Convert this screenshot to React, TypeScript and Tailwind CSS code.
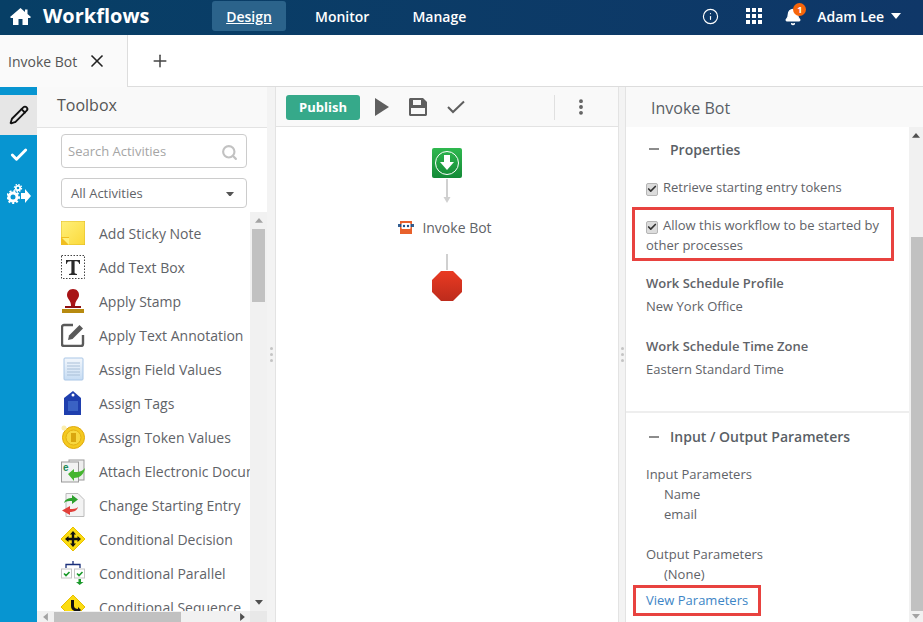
import React from 'react';
import { Info, Search, X, Plus, Check, Pencil, Bell, EllipsisVertical } from 'lucide-react';

const Caret = ({ dir = 'down', color = '#555', size = 8 }: { dir?: 'up' | 'down' | 'left' | 'right'; color?: string; size?: number }) => {
  const pts = { up: '0,6 5,0 10,6', down: '0,0 10,0 5,6', left: '6,0 6,10 0,5', right: '0,0 0,10 6,5' }[dir];
  const horizontal = dir === 'up' || dir === 'down';
  return (
    <svg width={horizontal ? size : 5} height={horizontal ? size * 0.6 : 8} viewBox={horizontal ? '0 0 10 6' : '0 0 6 10'}>
      <polygon points={pts} fill={color} />
    </svg>
  );
};

const Sticky = () => (
  <svg width="24" height="24" viewBox="0 0 24 24">
    <defs>
      <linearGradient id="st" x1="0" y1="0" x2="1" y2="1">
        <stop offset="0" stopColor="#fff07a" />
        <stop offset="1" stopColor="#fbd93a" />
      </linearGradient>
    </defs>
    <path d="M0 0H24V24H8L0 16Z" fill="url(#st)" stroke="#d9b320" strokeWidth="0.8" />
    <path d="M0 16H8V24H0Z" fill="#f0be20" />
    <path d="M1 17H8V24Z" fill="#fff07a" />
  </svg>
);

const TextBox = () => (
  <svg width="24" height="24" viewBox="0 0 24 24">
    <rect x="0.5" y="0.5" width="23" height="23" fill="none" stroke="#444" strokeDasharray="1.5 1.5" />
    <path d="M5 5H19V9H18.3C17.8 7 17 6.3 13.6 6.3V17.5C13.6 18.5 14.6 18.8 16 19V20H8V19C9.4 18.8 10.4 18.5 10.4 17.5V6.3C7 6.3 6.2 7 5.7 9H5Z" fill="#2a2a2a" />
  </svg>
);

const Stamp = () => (
  <svg width="24" height="24" viewBox="0 0 24 24">
    <path d="M12 0C16 0 18 3 18 6C18 10 14 11 14 17H10C10 11 6 10 6 6C6 3 8 0 12 0Z" fill="#a81416" />
    <rect x="4" y="17" width="16" height="2" fill="#8f1113" />
    <rect x="1" y="20" width="22" height="4" fill="#b78a10" />
  </svg>
);

const Annotate = () => (
  <svg width="24" height="24" viewBox="0 0 24 24">
    <path d="M12 2H3C2 2 1 3 1 4V21C1 22 2 23 3 23H20C21 23 22 22 22 21V12" fill="none" stroke="#5a5a5a" strokeWidth="2.4" />
    <path d="M7 17L8 12.5L18.5 2L22 5.5L11.5 16Z" fill="#5a5a5a" />
  </svg>
);

const FieldDoc = () => (
  <svg width="24" height="24" viewBox="0 0 24 24">
    <defs>
      <linearGradient id="fd" x1="0" y1="0" x2="0" y2="1">
        <stop offset="0" stopColor="#f3f7fc" />
        <stop offset="1" stopColor="#c6dcf3" />
      </linearGradient>
    </defs>
    <rect x="3" y="1" width="19" height="22" rx="1" fill="url(#fd)" stroke="#a9c6e6" />
    <path d="M6 6H19M6 9H19M6 12H19M6 15H19M6 18H19" stroke="#a9bfd8" strokeWidth="1.2" />
  </svg>
);

const Tag = () => (
  <svg width="24" height="24" viewBox="0 0 24 24">
    <path d="M12 0L20 7V24H3V7Z" fill="#1f3fae" />
    <circle cx="12" cy="4" r="1.5" fill="#fff" />
    <rect x="7" y="10" width="10" height="10" fill="#3a62c4" />
  </svg>
);

const Coin = () => (
  <svg width="24" height="24" viewBox="0 0 24 24">
    <circle cx="12.5" cy="12.5" r="11" fill="#f4c91f" stroke="#e0a90c" />
    <circle cx="12.5" cy="12.5" r="7.5" fill="#f8d840" stroke="#e3b014" />
    <rect x="10" y="8" width="5" height="9" fill="#d9a60e" />
    <circle cx="3" cy="3" r="2.5" fill="#fbeeb0" />
  </svg>
);

const Attach = () => (
  <svg width="24" height="24" viewBox="0 0 24 24">
    <rect x="8" y="1" width="15" height="20" fill="#eee" stroke="#999" />
    <rect x="0.5" y="3" width="17" height="20" fill="#f2f2f2" stroke="#999" />
    <text x="2" y="12" fontSize="10" fontWeight="700" fill="#1f8a5a" fontFamily="Liberation Sans, sans-serif">e</text>
    <path d="M7 15L13 10V13C17 13 21 13 24 9C23 16 18 19 13 19V22Z" fill="#45b52f" />
  </svg>
);

const Change = () => (
  <svg width="24" height="24" viewBox="0 0 24 24">
    <path d="M5 0.5H17L23 6.5V23.5H5Z" fill="#f3f3f3" stroke="#bbb" />
    <path d="M3 10C4 6 8 5 11 5V2L17 6.5L11 11V8C8 8 5 8 3 10Z" fill="#2ea12e" />
    <path d="M17 14C16 18 12 19 9 19V22L1 17.5L9 13V16C12 16 15 16 17 14Z" fill="#e2403a" />
  </svg>
);

const Decision = () => (
  <svg width="24" height="24" viewBox="0 0 24 24">
    <path d="M12 0L24 12L12 24L0 12Z" fill="#fbdc12" stroke="#e8c000" />
    <path d="M12 4L15 7.5H13.2V10.8H16.5V9L20 12L16.5 15V13.2H13.2V16.5H15L12 20L9 16.5H10.8V13.2H7.5V15L4 12L7.5 9V10.8H10.8V7.5H9Z" fill="#111" />
  </svg>
);

const Parallel = () => (
  <svg width="24" height="24" viewBox="0 0 24 24">
    <path d="M5 7V3.5H19V7M12 0V3.5" fill="none" stroke="#1a2f7a" strokeWidth="1.3" />
    <rect x="0.5" y="8" width="10" height="9" fill="#fff" stroke="#c5c5c5" />
    <rect x="13.5" y="8" width="10" height="9" fill="#fff" stroke="#c5c5c5" />
    <path d="M3 12.5L5 14.5L8.5 11M16 12.5L18 14.5L21.5 11" fill="none" stroke="#1c9a2c" strokeWidth="1.6" />
    <path d="M17.5 18H20V21H22.5L18.7 24L15 21H17.5Z" fill="#1c9a2c" />
  </svg>
);

const Sequence = () => (
  <svg width="24" height="24" viewBox="0 0 24 24">
    <path d="M12 0L24 12L12 24L0 12Z" fill="#fbdc12" stroke="#e8c000" />
    <path d="M10 5H13V11C13 13 15 14 17 14V12L20 15L17 18V16.5C13 16.5 10 15 10 11Z" fill="#111" />
  </svg>
);

const activities = [
  { name: 'Add Sticky Note', icon: <Sticky /> },
  { name: 'Add Text Box', icon: <TextBox /> },
  { name: 'Apply Stamp', icon: <Stamp /> },
  { name: 'Apply Text Annotation', icon: <Annotate /> },
  { name: 'Assign Field Values', icon: <FieldDoc /> },
  { name: 'Assign Tags', icon: <Tag /> },
  { name: 'Assign Token Values', icon: <Coin /> },
  { name: 'Attach Electronic Document', icon: <Attach /> },
  { name: 'Change Starting Entry', icon: <Change /> },
  { name: 'Conditional Decision', icon: <Decision /> },
  { name: 'Conditional Parallel', icon: <Parallel /> },
  { name: 'Conditional Sequence', icon: <Sequence /> },
];

const Dots = () => (
  <div className="flex flex-col gap-[3px]">
    <div className="w-[3px] h-[3px] rounded-full bg-[#c4c4c4]" />
    <div className="w-[3px] h-[3px] rounded-full bg-[#c4c4c4]" />
    <div className="w-[3px] h-[3px] rounded-full bg-[#c4c4c4]" />
  </div>
);

const Checkbox = () => (
  <span className="inline-flex w-[12px] h-[13px] mr-[5px] rounded-[2px] bg-[#dcdcdc] border border-[#b5b5b5] items-center justify-center align-[-2px]">
    <Check size={10} strokeWidth={4} color="#333" />
  </span>
);

const SectionTitle = ({ children }: { children: React.ReactNode }) => (
  <div className="flex items-center h-5 text-[14px] font-semibold text-[#5a5f66]">
    <div className="w-[10px] h-[2px] bg-[#8c8c8c] ml-[3px] mr-[11px]" />
    {children}
  </div>
);

export default function App() {
  return (
    <div className="w-[923px] h-[622px] flex flex-col overflow-hidden bg-white text-[13px] text-[#5f6368] font-['Open_Sans',sans-serif]">
      {/* Header */}
      <div className="h-[35px] shrink-0 pb-[3px] bg-gradient-to-r from-[#073f66] to-[#0f3768] flex items-center text-white">
        <svg width="21" height="17" viewBox="0 0 21 17" className="ml-[10px]" fill="#fff">
          <path d="M10.5 0L15 3.9V1.5H17.5V6L21 9L20 10H18V17H12.5V11H8.5V17H3V10H1L0 9Z" />
        </svg>
        <span className="ml-[12px] w-[169px] text-[20px] font-bold leading-none">Workflows</span>
        <div className="w-[74px] h-[30px] rounded-[3px] bg-[#2b638b] flex items-center justify-center text-[14px] font-semibold underline">Design</div>
        <span className="ml-[29px] text-[14px] font-semibold">Monitor</span>
        <span className="ml-[43px] text-[14px] font-semibold">Manage</span>
        <Info size={17} strokeWidth={1.6} className="ml-[236px]" />
        <svg width="16" height="16" viewBox="0 0 16 16" className="ml-[27px]" fill="#fff">
          <rect x="0" y="0" width="4" height="4" /><rect x="6" y="0" width="4" height="4" /><rect x="12" y="0" width="4" height="4" />
          <rect x="0" y="6" width="4" height="4" /><rect x="6" y="6" width="4" height="4" /><rect x="12" y="6" width="4" height="4" />
          <rect x="0" y="12" width="4" height="4" /><rect x="6" y="12" width="4" height="4" /><rect x="12" y="12" width="4" height="4" />
        </svg>
        <div className="relative ml-[22px] w-[18px] h-[20px]">
          <Bell size={18} fill="#fff" className="mt-[2px]" />
          <div className="absolute -top-[3px] left-[9px] w-[13px] h-[13px] rounded-full bg-[#f7650a] text-[9px] font-bold flex items-center justify-center">1</div>
        </div>
        <span className="ml-[15px] text-[14px] font-semibold">Adam Lee</span>
        <div className="ml-[7px] flex"><Caret color="#fff" size={10} /></div>
      </div>

      {/* Tabs */}
      <div className="h-[52px] shrink-0 flex">
        <div className="w-[128px] border-r border-[#ddd] bg-[#fafafa] flex items-center pl-2 text-[14px] text-[#555]">
          Invoke Bot
          <X size={20} strokeWidth={2} color="#222" className="ml-[10px]" />
        </div>
        <div className="flex-1 border-b border-[#ddd] bg-white flex items-center pl-[22px]">
          <Plus size={20} strokeWidth={1.8} color="#444" />
        </div>
      </div>

      <div className="flex-1 flex min-h-0">
        {/* Side rail */}
        <div className="w-[37px] shrink-0 bg-[#0795d1] pt-[8px] flex flex-col items-center">
          <div className="w-full h-[40px] bg-[#e6e6e6] flex items-center justify-center">
            <Pencil size={20} strokeWidth={2.2} color="#111" />
          </div>
          <div className="h-[39px] flex items-center justify-center">
            <Check size={20} strokeWidth={3.5} color="#fff" />
          </div>
          <svg width="24" height="20" viewBox="0 0 24 20" className="mt-[10px]">
            <circle cx="6" cy="13" r="4" fill="none" stroke="#fff" strokeWidth="3" />
            <circle cx="6" cy="13" r="6" fill="none" stroke="#fff" strokeWidth="2" strokeDasharray="2 2" />
            <circle cx="11" cy="4" r="2.2" fill="none" stroke="#fff" strokeWidth="1.8" />
            <circle cx="11" cy="4" r="3.6" fill="none" stroke="#fff" strokeWidth="1.2" strokeDasharray="1.5 1.3" />
            <path d="M14 9H18V5L24 12L18 19V15H14Z" fill="#fff" />
          </svg>
        </div>

        {/* Toolbox */}
        <div className="w-[230px] shrink-0 flex flex-col bg-white">
          <div className="h-[41px] shrink-0 pb-[5px] bg-[#f9f9f9] border-b border-[#e3e3e3] flex items-center pl-5 text-[16px] font-medium text-[#555]">Toolbox</div>
          <div className="shrink-0 pl-6 pr-5 pt-[6px] pb-[4px]">
            <div className="h-[34px] pt-[2px] rounded border border-[#ccc] flex items-center justify-between pl-[6px] pr-2 text-[#a5a5a5]">
              Search Activities
              <Search size={17} strokeWidth={3} color="#c2c2c2" />
            </div>
            <div className="h-[30px] pt-[2px] mt-[10px] rounded border border-[#ccc] flex items-center justify-between pl-[9px] pr-[12px] text-[#5f6368]">
              All Activities
              <Caret />
            </div>
          </div>
          <div className="flex-1 flex min-h-0">
            <div className="flex-1 min-w-0 overflow-hidden pt-[9px] pl-6 flex flex-col gap-[10px]">
              {activities.map((a) => (
                <div key={a.name} className="h-6 shrink-0 flex items-center whitespace-nowrap text-[14px]">
                  <div className="w-6 h-6 shrink-0">{a.icon}</div>
                  <span className="ml-[14px]">{a.name}</span>
                </div>
              ))}
            </div>
            <div className="w-[17px] shrink-0 bg-[#f1f1f1] flex flex-col items-center">
              <div className="h-[17px] flex items-center"><Caret dir="up" color="#a3a3a3" /></div>
              <div className="w-[13px] h-[73px] bg-[#c1c1c1]" />
              <div className="flex-1" />
              <div className="h-[17px] flex items-center"><Caret color="#505050" /></div>
            </div>
          </div>
          <div className="h-[11px] shrink-0 bg-[#f1f1f1] flex items-center">
            <div className="w-[17px] flex justify-center"><Caret dir="left" color="#a3a3a3" /></div>
            <div className="w-[127px] h-[10px] bg-[#c1c1c1]" />
            <div className="flex-1 flex justify-end pr-[5px]"><Caret dir="right" color="#505050" /></div>
            <div className="w-[17px] h-full bg-[#e8e8e8]" />
          </div>
        </div>

        {/* Splitter */}
        <div className="w-[9px] shrink-0 bg-[#f3f3f3] border-r border-[#e3e3e3] flex items-center justify-center"><Dots /></div>

        {/* Canvas */}
        <div className="w-[342px] shrink-0 flex flex-col bg-white">
          <div className="h-[40px] shrink-0 pt-px bg-[#f9f9f9] border-b border-[#e3e3e3] flex items-center pl-[10px]">
            <div className="w-[74px] h-[25px] pt-[2px] rounded-[3px] bg-[#36a98a] text-white text-[13px] font-bold flex items-center justify-center">Publish</div>
            <svg width="14" height="18" viewBox="0 0 14 18" className="ml-[15px]">
              <polygon points="0,0 14,9 0,18" fill="#5f5f5f" />
            </svg>
            <svg width="18" height="18" viewBox="0 0 18 18" className="ml-[20px]">
              <path fillRule="evenodd" d="M1.5 0H14L18 4V16.5C18 17.3 17.3 18 16.5 18H1.5C0.7 18 0 17.3 0 16.5V1.5C0 0.7 0.7 0 1.5 0ZM4 2V7H12V2ZM2 10V16H16V10Z" fill="#5f5f5f" />
            </svg>
            <svg width="18" height="14" viewBox="0 0 18 14" className="ml-[20px]">
              <path d="M1 7L6 12L17 1.5" fill="none" stroke="#5f5f5f" strokeWidth="2" />
            </svg>
            <div className="w-px h-[25px] bg-[#e0e0e0] ml-[89px]" />
            <EllipsisVertical size={20} strokeWidth={2.6} color="#5f5f5f" className="ml-[16px]" />
          </div>
          <div className="flex flex-col items-center pt-[21px]">
            <div className="w-[30px] h-[30px] rounded-[2px] bg-gradient-to-b from-[#2fb84f] to-[#138a37] flex items-center justify-center">
              <svg width="26" height="26" viewBox="0 0 26 26">
                <circle cx="13" cy="13" r="11.5" fill="none" stroke="#fff" strokeWidth="1" />
                <path d="M10 5H16V12H20L13 20L6 12H10Z" fill="#fff" />
              </svg>
            </div>
            <svg width="10" height="26" viewBox="0 0 10 26" className="mt-[1px]">
              <path d="M5 0V19" stroke="#d0d0d0" strokeWidth="2" />
              <path d="M1.5 18H8.5L5 24Z" fill="#d0d0d0" />
            </svg>
            <div className="h-[20px] mt-[12px] -ml-[4px] flex items-center text-[14px]">
              <svg width="16" height="13" viewBox="0 0 16 13">
                <rect x="2" y="0" width="12" height="13" fill="#e8612c" />
                <rect x="0" y="3" width="16" height="3" fill="#1d4f86" opacity="0.9" />
                <rect x="3.5" y="2" width="9" height="6" rx="1" fill="#fff" />
                <circle cx="6" cy="5" r="1.2" fill="#1d4f86" />
                <circle cx="10" cy="5" r="1.2" fill="#1d4f86" />
              </svg>
              <span className="ml-2">Invoke Bot</span>
            </div>
            <div className="w-[2px] h-[16px] mt-[17px] bg-[#d0d0d0]" />
            <svg width="30" height="30" viewBox="0 0 30 30" className="mt-px">
              <defs>
                <linearGradient id="stop" x1="0" y1="0" x2="0" y2="1">
                  <stop offset="0" stopColor="#ea3a22" />
                  <stop offset="1" stopColor="#bd2b1c" />
                </linearGradient>
              </defs>
              <polygon points="9,0 21,0 30,9 30,21 21,30 9,30 0,21 0,9" fill="url(#stop)" />
            </svg>
          </div>
        </div>

        {/* Splitter */}
        <div className="w-[8px] shrink-0 bg-[#f3f3f3] border-x border-[#e3e3e3] flex items-center justify-center"><Dots /></div>

        {/* Properties panel */}
        <div className="flex-1 min-w-0 flex flex-col bg-white">
          <div className="h-[40px] shrink-0 pt-[2px] bg-[#f9f9f9] flex items-center pl-[25px] text-[16px] text-[#5a5f66]">Invoke Bot</div>
          <div className="flex-1 flex min-h-0">
            <div className="flex-1 min-w-0 overflow-hidden">
              <div className="pt-[12px] pl-5 pb-[32px] border-b-2 border-[#eee]">
                <SectionTitle>Properties</SectionTitle>
                <div className="h-5 mt-[18px] leading-5"><Checkbox />Retrieve starting entry tokens</div>
                <div className="mt-[10px] h-[54px] -ml-[14px] mr-[15px] border-[3px] border-[#e8423f] pl-[11px] pt-[5px] leading-5">
                  <Checkbox />Allow this workflow to be started by other processes
                </div>
                <div className="mt-[12px] h-5 leading-5 font-semibold">Work Schedule Profile</div>
                <div className="mt-[3px] h-5 leading-5">New York Office</div>
                <div className="mt-[20px] h-5 leading-5 font-semibold">Work Schedule Time Zone</div>
                <div className="mt-[3px] h-5 leading-5">Eastern Standard Time</div>
              </div>
              <div className="pt-[14px] pl-5 leading-5">
                <SectionTitle>Input / Output Parameters</SectionTitle>
                <div className="mt-[17px]">Input Parameters</div>
                <div className="pl-[18px]">Name</div>
                <div className="pl-[18px]">email</div>
                <div className="mt-[20px]">Output Parameters</div>
                <div className="pl-[18px]">(None)</div>
                <div className="mt-[1px] -ml-[13px] w-[128px] h-[31px] pb-[2px] border-[3px] border-[#e8423f] pl-[10px] flex items-center text-[#3d85c6]">View Parameters</div>
              </div>
            </div>
            <div className="w-[14px] shrink-0 bg-[#f1f1f1] flex flex-col items-center">
              <div className="h-[17px] flex items-center"><Caret dir="up" color="#505050" /></div>
              <div className="h-[93px]" />
              <div className="w-[12px] self-end flex-1 bg-[#c1c1c1]" />
              <div className="h-[11px] flex items-center"><Caret color="#a3a3a3" /></div>
            </div>
          </div>
        </div>
      </div>
    </div>
  );
}
